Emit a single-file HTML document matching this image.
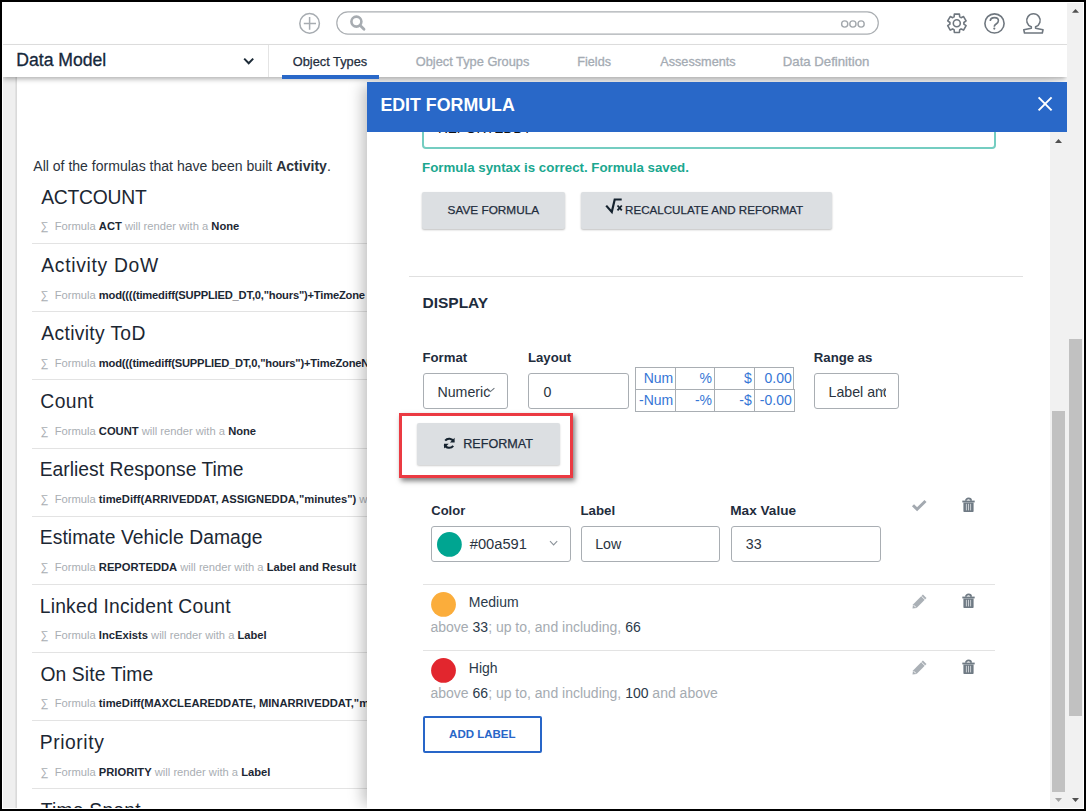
<!DOCTYPE html>
<html><head><meta charset="utf-8">
<style>
*{box-sizing:border-box;margin:0;padding:0}
html,body{width:1086px;height:811px;overflow:hidden;background:#fff}
body{font-family:"Liberation Sans",sans-serif;position:relative}
.t{position:absolute;line-height:1;white-space:nowrap}
.b{font-weight:bold}
.box{position:absolute}
svg{position:absolute;overflow:visible}
</style></head>
<body>
<div class="box" style="left:0;top:0;width:1086px;height:811px;background:#fff"></div>
<div class="box" style="left:3px;top:77px;width:14px;height:731px;background:#efefef"></div>
<div class="box" style="left:14.5px;top:77px;width:2.5px;height:731px;background:linear-gradient(90deg,#e6e6e6,#d6d6d6)"></div>
<div class="box" style="left:2px;top:2px;width:1065px;height:42px;background:#fff"></div>
<div class="box" style="left:2px;top:44px;width:1065px;height:1px;background:#dfdfdf"></div>
<div class="box" style="left:2px;top:45px;width:1065px;height:32px;background:#fff;box-shadow:0 3px 5px -1px rgba(0,0,0,.32);z-index:6"></div>
<div class="box" style="left:268px;top:45px;width:1px;height:32px;background:#e4e4e4;z-index:7"></div>
<div class="t " style="left:16.26px;top:52px;font-size:17.6px;color:#15283b;z-index:7;-webkit-text-stroke:0.3px #15283b">Data Model</div>
<svg style="left:243px;top:57px;z-index:7" width="12" height="9"><path d="M1.2,1.6 L5.7,6.2 L10.2,1.6" fill="none" stroke="#1d2b38" stroke-width="2"/></svg>
<div class="t " style="left:292.79px;top:56px;font-size:12.8px;color:#1f2d3d;z-index:7;-webkit-text-stroke:0.25px #1f2d3d">Object Types</div>
<div class="box" style="left:282px;top:74.6px;width:97px;height:4px;background:#2968c8;z-index:7"></div>
<div class="t " style="left:415.79px;top:56px;font-size:12.8px;color:#a4abb3;z-index:7;-webkit-text-stroke:0.3px #a4abb3">Object Type Groups</div>
<div class="t " style="left:577.37px;top:56px;font-size:12.6px;color:#a4abb3;z-index:7;-webkit-text-stroke:0.3px #a4abb3">Fields</div>
<div class="t " style="left:660.18px;top:56px;font-size:12.7px;color:#a4abb3;z-index:7;-webkit-text-stroke:0.3px #a4abb3">Assessments</div>
<div class="t " style="left:782.82px;top:55px;font-size:13.2px;color:#a4abb3;z-index:7;-webkit-text-stroke:0.3px #a4abb3">Data Definition</div>
<svg style="left:0;top:0;z-index:7" width="1086" height="45"><circle cx="309.6" cy="23.4" r="9.8" fill="none" stroke="#a7acb1" stroke-width="1.5"/><path d="M303.8,23.4 H316 M309.6,17 V29.8" stroke="#a7acb1" stroke-width="1.5"/><rect x="336.8" y="11.8" width="541.5" height="22.3" rx="11.15" fill="none" stroke="#aaaeb2" stroke-width="1.2"/><circle cx="356.4" cy="21.6" r="5" fill="none" stroke="#a7acb1" stroke-width="2.6"/><path d="M360,25.3 L364,29.2" stroke="#a7acb1" stroke-width="2.8" stroke-linecap="round"/><circle cx="844.7" cy="24" r="3.1" fill="none" stroke="#a3a8ad" stroke-width="1.4"/><circle cx="852.9" cy="24" r="3.1" fill="none" stroke="#a3a8ad" stroke-width="1.4"/><circle cx="861.1" cy="24" r="3.1" fill="none" stroke="#a3a8ad" stroke-width="1.4"/><path d="M954.10,16.88 L954.37,14.14 L959.43,14.14 L959.70,16.88 A7.0,7.0 0 0 1 961.06,17.67 L963.56,16.53 L966.10,20.92 L963.86,22.52 A7.0,7.0 0 0 1 963.86,24.08 L966.10,25.68 L963.56,30.07 L961.06,28.93 A7.0,7.0 0 0 1 959.70,29.72 L959.43,32.46 L954.37,32.46 L954.10,29.72 A7.0,7.0 0 0 1 952.74,28.93 L950.24,30.07 L947.70,25.68 L949.94,24.08 A7.0,7.0 0 0 1 949.94,22.52 L947.70,20.92 L950.24,16.53 L952.74,17.67 A7.0,7.0 0 0 1 954.10,16.88 Z" fill="none" stroke="#6f777f" stroke-width="1.6" stroke-linejoin="round"/><circle cx="956.8" cy="23.3" r="3.5" fill="none" stroke="#6f777f" stroke-width="1.6"/><circle cx="994.5" cy="23.45" r="9.6" fill="none" stroke="#6f777f" stroke-width="1.6"/><path d="M990.3,20.9 C990.3,18.4 992.4,17.6 994.6,17.6 C997,17.6 998.4,19 998.4,20.7 C998.4,22.9 996.6,23.6 995.5,24.5 C994.6,25.2 994.3,25.8 994.3,26.8" fill="none" stroke="#6f777f" stroke-width="1.6"/><circle cx="994.3" cy="28.6" r="1.1" fill="#6f777f"/><path d="M1031.3,26.8 L1031.3,28.2 L1023.8,29.8 L1024.5,33 L1042.3,33 L1043,29.8 L1035.6,28.2 L1035.6,26.8 A6.7,6.7 0 1 0 1031.3,26.8 Z" fill="none" stroke="#6f777f" stroke-width="1.6" stroke-linejoin="round"/></svg>
<div class="t " style="left:33.27px;top:159px;font-size:14.05px;color:#2b333c">All of the formulas that have been built <span class="b">Activity</span>.</div>
<div class="t " style="left:41.26px;top:188px;font-size:19.3px;color:#1c2733;letter-spacing:-0.24px">ACTCOUNT</div>
<div class="t sub" style="left:40.46px;top:221px;font-size:11.2px;"><span class="g">&sum;&nbsp; Formula</span> <b>ACT</b> <span class="g">will render with a</span> <b>None</b></div>
<div class="box" style="left:32px;top:243.0px;width:340px;height:1px;background:#e3e3e3"></div>
<div class="t " style="left:41.26px;top:256px;font-size:19.3px;color:#1c2733;letter-spacing:0.7px">Activity DoW</div>
<div class="t sub" style="left:40.46px;top:290px;font-size:11.2px;"><span class="g">&sum;&nbsp; Formula</span> <b style="letter-spacing:-0.2px">mod((((timediff(SUPPLIED_DT,0,"hours")+TimeZone</b></div>
<div class="box" style="left:32px;top:311.1px;width:340px;height:1px;background:#e3e3e3"></div>
<div class="t " style="left:41.26px;top:324px;font-size:19.3px;color:#1c2733;letter-spacing:0.34px">Activity ToD</div>
<div class="t sub" style="left:40.46px;top:358px;font-size:11.2px;"><span class="g">&sum;&nbsp; Formula</span> <b style="letter-spacing:-0.2px">mod(((timediff(SUPPLIED_DT,0,"hours")+TimeZoneN</b></div>
<div class="box" style="left:32px;top:379.3px;width:340px;height:1px;background:#e3e3e3"></div>
<div class="t " style="left:40.32px;top:392px;font-size:19.3px;color:#1c2733;letter-spacing:0.4px">Count</div>
<div class="t sub" style="left:40.46px;top:426px;font-size:11.2px;"><span class="g">&sum;&nbsp; Formula</span> <b>COUNT</b> <span class="g">will render with a</span> <b>None</b></div>
<div class="box" style="left:32px;top:447.5px;width:340px;height:1px;background:#e3e3e3"></div>
<div class="t " style="left:39.72px;top:460px;font-size:19.3px;color:#1c2733;letter-spacing:0.01px">Earliest Response Time</div>
<div class="t sub" style="left:40.46px;top:494px;font-size:11.2px;"><span class="g">&sum;&nbsp; Formula</span> <b>timeDiff(ARRIVEDDAT, ASSIGNEDDA,"minutes")</b> <span class="g">will</span></div>
<div class="box" style="left:32px;top:515.6px;width:340px;height:1px;background:#e3e3e3"></div>
<div class="t " style="left:39.72px;top:528px;font-size:19.3px;color:#1c2733;letter-spacing:0.09px">Estimate Vehicle Damage</div>
<div class="t sub" style="left:40.46px;top:562px;font-size:11.2px;"><span class="g">&sum;&nbsp; Formula</span> <b>REPORTEDDA</b> <span class="g">will render with a</span> <b>Label and Result</b></div>
<div class="box" style="left:32px;top:583.8px;width:340px;height:1px;background:#e3e3e3"></div>
<div class="t " style="left:39.72px;top:597px;font-size:19.3px;color:#1c2733;letter-spacing:0.22px">Linked Incident Count</div>
<div class="t sub" style="left:40.46px;top:630px;font-size:11.2px;"><span class="g">&sum;&nbsp; Formula</span> <b>IncExists</b> <span class="g">will render with a</span> <b>Label</b></div>
<div class="box" style="left:32px;top:651.9px;width:340px;height:1px;background:#e3e3e3"></div>
<div class="t " style="left:40.39px;top:665px;font-size:19.3px;color:#1c2733;letter-spacing:0.13px">On Site Time</div>
<div class="t sub" style="left:40.46px;top:698px;font-size:11.2px;"><span class="g">&sum;&nbsp; Formula</span> <b>timeDiff(MAXCLEAREDDATE, MINARRIVEDDAT,"minutes")</b></div>
<div class="box" style="left:32px;top:720.1px;width:340px;height:1px;background:#e3e3e3"></div>
<div class="t " style="left:39.72px;top:733px;font-size:19.3px;color:#1c2733;letter-spacing:0.58px">Priority</div>
<div class="t sub" style="left:40.46px;top:767px;font-size:11.2px;"><span class="g">&sum;&nbsp; Formula</span> <b>PRIORITY</b> <span class="g">will render with a</span> <b>Label</b></div>
<div class="box" style="left:32px;top:788.2px;width:340px;height:1px;background:#e3e3e3"></div>
<div class="t " style="left:40.87px;top:801px;font-size:19.3px;color:#1c2733;letter-spacing:0.2px">Time Spent</div>
<div class="t sub" style="left:40.46px;top:835px;font-size:11.2px;"><span class="g">&sum;&nbsp; Formula</span> <b>timeDiff</b></div>
<div class="box" style="left:32px;top:856.4px;width:340px;height:1px;background:#e3e3e3"></div>
<style>.sub{color:#1c2733}.sub .g{color:#a9aeb3}.sub b{font-weight:bold}</style>
<div class="box" style="left:367px;top:82px;width:700px;height:726px;background:#fff;box-shadow:-7px 0 14px -3px rgba(0,0,0,.26);z-index:5"></div>
<div id="mbody" class="box" style="left:367px;top:132px;width:683px;height:676px;overflow:hidden;z-index:6">
<div class="box" style="left:54.50px;top:-32.00px;width:574.50px;height:48.50px;border:2px solid #74cdc1;border-radius:4px;background:#fff"></div>
<div class="t " style="left:70.88px;top:-10px;font-size:13.6px;color:#111">REPORTEDDT</div>
<div class="t " style="left:55.11px;top:29px;font-size:13.3px;color:#1ba78f;font-weight:bold">Formula syntax is correct. Formula saved.</div>
<div class="box" style="left:55.30px;top:60.00px;width:143.20px;height:37.20px;background:#dcdfe2;border-radius:2px;box-shadow:0 1px 2px rgba(0,0,0,.25)"></div>
<div class="t " style="left:80.56px;top:73px;font-size:11.8px;color:#1f2d3d;-webkit-text-stroke:0.25px #1f2d3d">SAVE FORMULA</div>
<div class="box" style="left:214.00px;top:60.00px;width:251.40px;height:37.00px;background:#dcdfe2;border-radius:2px;box-shadow:0 1px 2px rgba(0,0,0,.25)"></div>
<svg style="left:239px;top:66px" width="20" height="16"><path d="M0.2,7.6 L5.8,14 L8.7,1.5 L15.7,1.5" fill="none" stroke="#15222e" stroke-width="2.2"/><path d="M11.5,7.5 L15.8,12.4 M15.8,7.5 L11.5,12.4" stroke="#15222e" stroke-width="1.8"/></svg>
<div class="t " style="left:258.05px;top:72px;font-size:11.6px;color:#1f2d3d;-webkit-text-stroke:0.25px #1f2d3d">RECALCULATE AND REFORMAT</div>
<div class="box" style="left:42.00px;top:144.00px;width:613.60px;height:1.00px;background:#e0e0e0"></div>
<div class="t " style="left:55.46px;top:163px;font-size:15.5px;color:#1f2d3d;font-weight:bold">DISPLAY</div>
<div class="t " style="left:55.42px;top:219px;font-size:13.2px;color:#1f2d3d;font-weight:bold">Format</div>
<div class="t " style="left:160.92px;top:219px;font-size:13.2px;color:#1f2d3d;font-weight:bold">Layout</div>
<div class="t " style="left:446.82px;top:219px;font-size:13.2px;color:#1f2d3d;font-weight:bold">Range as</div>
<div class="box" style="left:56.40px;top:241.40px;width:84.20px;height:35.80px;border:1px solid #a9aeb3;border-radius:3px;background:#fff"></div>
<div class="t " style="left:70.44px;top:253px;font-size:14.2px;color:#2b3440;width:54px;overflow:hidden">Numeric</div>
<svg style="left:119px;top:255px" width="10" height="7"><path d="M1,1.4 L4.4,4.6 L8.4,1.2" fill="none" stroke="#6a737c" stroke-width="1.1"/></svg>
<div class="box" style="left:161.40px;top:241.40px;width:100.30px;height:35.80px;border:1px solid #a9aeb3;border-radius:3px;background:#fff"></div>
<div class="t " style="left:176.45px;top:253px;font-size:14.2px;color:#2b3440">0</div>
<div class="box" style="left:447.20px;top:241.30px;width:84.70px;height:36.00px;border:1px solid #a9aeb3;border-radius:3px;background:#fff"></div>
<div class="t " style="left:461.54px;top:253px;font-size:14.2px;color:#2b3440;width:57px;overflow:hidden">Label and</div>
<svg style="left:510px;top:255px" width="10" height="7"><path d="M1,1.4 L4.4,4.6 L8.4,1.2" fill="none" stroke="#6a737c" stroke-width="1.1"/></svg>
<div class="box" style="left:268.20px;top:235.00px;width:158.80px;height:22.50px;border:1px solid #a9aeb3;border-bottom:none"></div>
<div class="box" style="left:268.20px;top:257.00px;width:159.60px;height:22.80px;border:1px solid #a9aeb3"></div>
<div class="box" style="left:308.20px;top:235.00px;width:1.00px;height:44.00px;background:#a9aeb3"></div>
<div class="box" style="left:347.20px;top:235.00px;width:1.00px;height:44.00px;background:#a9aeb3"></div>
<div class="box" style="left:387.40px;top:235.00px;width:1.00px;height:44.00px;background:#a9aeb3"></div>
<div class="t" style="right:376.78px;top:239px;font-size:14px;color:#3676d6">Num</div>
<div class="t" style="right:376.78px;top:261px;font-size:14px;color:#3676d6">-Num</div>
<div class="t" style="right:338.00px;top:239px;font-size:14px;color:#3676d6">%</div>
<div class="t" style="right:338.00px;top:261px;font-size:14px;color:#3676d6">-%</div>
<div class="t" style="right:298.27px;top:239px;font-size:14px;color:#3676d6">$</div>
<div class="t" style="right:298.27px;top:261px;font-size:14px;color:#3676d6">-$</div>
<div class="t" style="right:258.25px;top:239px;font-size:14px;color:#3676d6">0.00</div>
<div class="t" style="right:258.25px;top:261px;font-size:14px;color:#3676d6">-0.00</div>
<div class="box" style="left:50.00px;top:291.40px;width:143.00px;height:41.50px;background:#dcdfe2;border-radius:2px;box-shadow:0 1px 2px rgba(0,0,0,.2)"></div>
<svg style="left:76px;top:305px" width="13" height="13"><path d="M10.6,4.6 A4.9,4.9 0 0 0 2.2,3.6 M1.6,7.6 A4.9,4.9 0 0 0 10.2,8.8" fill="none" stroke="#15222e" stroke-width="2"/><path d="M11.6,0.8 L11.6,5.6 L6.9,5.6 Z M1,11.6 L1,6.8 L5.7,6.8 Z" fill="#15222e"/></svg>
<div class="t " style="left:96.27px;top:306px;font-size:12.6px;color:#1f2d3d;-webkit-text-stroke:0.25px #1f2d3d">REFORMAT</div>
<div class="box" style="left:32.20px;top:280.70px;width:174.00px;height:65.00px;border:3.4px solid #eb3a42;box-shadow:2px 3px 5px rgba(0,0,0,.5)"></div>
<div class="t " style="left:64.27px;top:372px;font-size:13.0px;color:#1f2d3d;font-weight:bold">Color</div>
<div class="t " style="left:213.41px;top:372px;font-size:13.3px;color:#1f2d3d;font-weight:bold">Label</div>
<div class="t " style="left:363.29px;top:372px;font-size:13.6px;color:#1f2d3d;font-weight:bold">Max Value</div>
<div class="box" style="left:64.10px;top:394.30px;width:139.80px;height:36.20px;border:1px solid #a9aeb3;border-radius:3px;background:#fff"></div>
<svg style="left:70px;top:400px" width="26" height="26"><circle cx="12.4" cy="12.4" r="12.4" fill="#00a591"/></svg>
<div class="t " style="left:102.74px;top:405px;font-size:14.7px;color:#2b3440">#00a591</div>
<svg style="left:182px;top:408px" width="10" height="7"><path d="M1,1.2 L4.6,5 L8.2,1.2" fill="none" stroke="#8d949b" stroke-width="1.1"/></svg>
<div class="box" style="left:214.20px;top:394.30px;width:139.20px;height:36.20px;border:1px solid #a9aeb3;border-radius:3px;background:#fff"></div>
<div class="t " style="left:228.14px;top:405px;font-size:14.2px;color:#2b3440">Low</div>
<div class="box" style="left:364.30px;top:394.30px;width:149.30px;height:36.20px;border:1px solid #a9aeb3;border-radius:3px;background:#fff"></div>
<div class="t " style="left:378.76px;top:405px;font-size:14.2px;color:#2b3440">33</div>
<svg style="left:544px;top:367px" width="17" height="14"><path d="M2,6.2 L6.1,10.2 L14.5,2" fill="none" stroke="#a3a9b0" stroke-width="3"/></svg>
<svg style="left:595.3px;top:365.8px" width="14" height="15"><path d="M3.9,2.8 A2.6,2.4 0 0 1 9.1,2.8" fill="none" stroke="#6f7a84" stroke-width="1.8"/><rect x="0.3" y="2.6" width="12.4" height="1.8" fill="#6f7a84"/><path d="M1.4,4.4 H11.6 V13.2 Q11.6,14 10.8,14 H2.2 Q1.4,14 1.4,13.2 Z" fill="#6f7a84"/><path d="M4.4,5.8 V12.4 M6.5,5.8 V12.4 M8.6,5.8 V12.4" stroke="#d5d9dc" stroke-width="0.9"/></svg>
<div class="box" style="left:56.00px;top:452.00px;width:571.60px;height:1.00px;background:#e3e3e3"></div>
<div class="box" style="left:56.00px;top:518.00px;width:571.60px;height:1.00px;background:#e3e3e3"></div>
<svg style="left:64px;top:460px" width="26" height="26"><circle cx="12.5" cy="12.4" r="12.4" fill="#fbad3b"/></svg>
<div class="t " style="left:101.85px;top:463px;font-size:14px;color:#2b3a4a">Medium</div>
<div class="t " style="left:63.51px;top:488px;font-size:14px;color:#a5abb1">above <span style="color:#2b3a4a">33</span>; up to, and including, <span style="color:#2b3a4a">66</span></div>
<svg style="left:544.5px;top:462px" width="16" height="16"><path d="M0.5,14.4 L1.0,10.4 L10.9,0.5 L14.5,4.1 L4.6,14.0 Z" fill="#aab0b6"/><path d="M9.3,2.0 L13.0,5.7" stroke="#fff" stroke-width="0.9"/><path d="M1.7,11.2 L3.9,13.4" stroke="#fff" stroke-width="1"/></svg>
<svg style="left:595.3px;top:462px" width="14" height="15"><path d="M3.9,2.8 A2.6,2.4 0 0 1 9.1,2.8" fill="none" stroke="#6f7a84" stroke-width="1.8"/><rect x="0.3" y="2.6" width="12.4" height="1.8" fill="#6f7a84"/><path d="M1.4,4.4 H11.6 V13.2 Q11.6,14 10.8,14 H2.2 Q1.4,14 1.4,13.2 Z" fill="#6f7a84"/><path d="M4.4,5.8 V12.4 M6.5,5.8 V12.4 M8.6,5.8 V12.4" stroke="#d5d9dc" stroke-width="0.9"/></svg>
<svg style="left:64px;top:526px" width="26" height="26"><circle cx="12.5" cy="12.4" r="12.4" fill="#e2262e"/></svg>
<div class="t " style="left:101.85px;top:529px;font-size:14px;color:#2b3a4a">High</div>
<div class="t " style="left:63.51px;top:554px;font-size:14px;color:#a5abb1">above <span style="color:#2b3a4a">66</span>; up to, and including, <span style="color:#2b3a4a">100</span> and above</div>
<svg style="left:544.5px;top:528px" width="16" height="16"><path d="M0.5,14.4 L1.0,10.4 L10.9,0.5 L14.5,4.1 L4.6,14.0 Z" fill="#aab0b6"/><path d="M9.3,2.0 L13.0,5.7" stroke="#fff" stroke-width="0.9"/><path d="M1.7,11.2 L3.9,13.4" stroke="#fff" stroke-width="1"/></svg>
<svg style="left:595.3px;top:528px" width="14" height="15"><path d="M3.9,2.8 A2.6,2.4 0 0 1 9.1,2.8" fill="none" stroke="#6f7a84" stroke-width="1.8"/><rect x="0.3" y="2.6" width="12.4" height="1.8" fill="#6f7a84"/><path d="M1.4,4.4 H11.6 V13.2 Q11.6,14 10.8,14 H2.2 Q1.4,14 1.4,13.2 Z" fill="#6f7a84"/><path d="M4.4,5.8 V12.4 M6.5,5.8 V12.4 M8.6,5.8 V12.4" stroke="#d5d9dc" stroke-width="0.9"/></svg>
<div class="box" style="left:56.00px;top:584.20px;width:118.80px;height:36.70px;border:2px solid #2866c8;border-radius:2px"></div>
<div class="t " style="left:82.11px;top:597px;font-size:11.5px;color:#2866c8;font-weight:bold">ADD LABEL</div>
</div>
<div class="box" style="left:367px;top:82px;width:700px;height:50px;background:#2968c8;z-index:7"></div>
<div class="t b" style="left:380.41px;top:97px;font-size:17.8px;color:#fff;z-index:8">EDIT FORMULA</div>
<svg style="left:1036px;top:95px;z-index:8" width="18" height="18"><path d="M2.6,2.4 L15.6,15.4 M15.6,2.4 L2.6,15.4" stroke="#fff" stroke-width="2"/></svg>
<div class="box" style="left:1050px;top:132px;width:17px;height:677px;background:#f1f1f1;z-index:8"></div>
<div class="box" style="left:1052px;top:411px;width:13px;height:381px;background:#c1c1c1;z-index:9"></div>
<svg style="left:0;top:0;z-index:9" width="1086" height="811"><path d="M1055,143 L1062,143 L1058.5,139 Z" fill="#505050"/><path d="M1055,798 L1062,798 L1058.5,802 Z" fill="#a3a3a3"/></svg>
<div class="box" style="left:1067px;top:3px;width:16px;height:805px;background:#f1f1f1;z-index:9"></div>
<div class="box" style="left:1069px;top:339px;width:13px;height:377px;background:#c1c1c1;z-index:10"></div>
<svg style="left:0;top:0;z-index:10" width="1086" height="811"><path d="M1072,12.8 L1079,12.8 L1075.5,9 Z" fill="#505050"/><path d="M1072,798 L1079,798 L1075.5,802 Z" fill="#505050"/></svg>
<div class="box" style="left:0;top:0;width:1086px;height:2px;background:#000;z-index:20"></div>
<div class="box" style="left:0;top:809px;width:1086px;height:2px;background:#000;z-index:20"></div>
<div class="box" style="left:2px;top:808px;width:1082px;height:1px;background:#fff;z-index:20"></div>
<div class="box" style="left:2px;top:2px;width:1px;height:807px;background:#fff;z-index:20"></div>
<div class="box" style="left:1083px;top:2px;width:1px;height:807px;background:#fff;z-index:20"></div>
<div class="box" style="left:2px;top:2px;width:1082px;height:1px;background:#fff;z-index:20"></div>
<div class="box" style="left:0;top:0;width:2px;height:811px;background:#000;z-index:20"></div>
<div class="box" style="left:1084px;top:0;width:2px;height:811px;background:#000;z-index:20"></div>
</body></html>
